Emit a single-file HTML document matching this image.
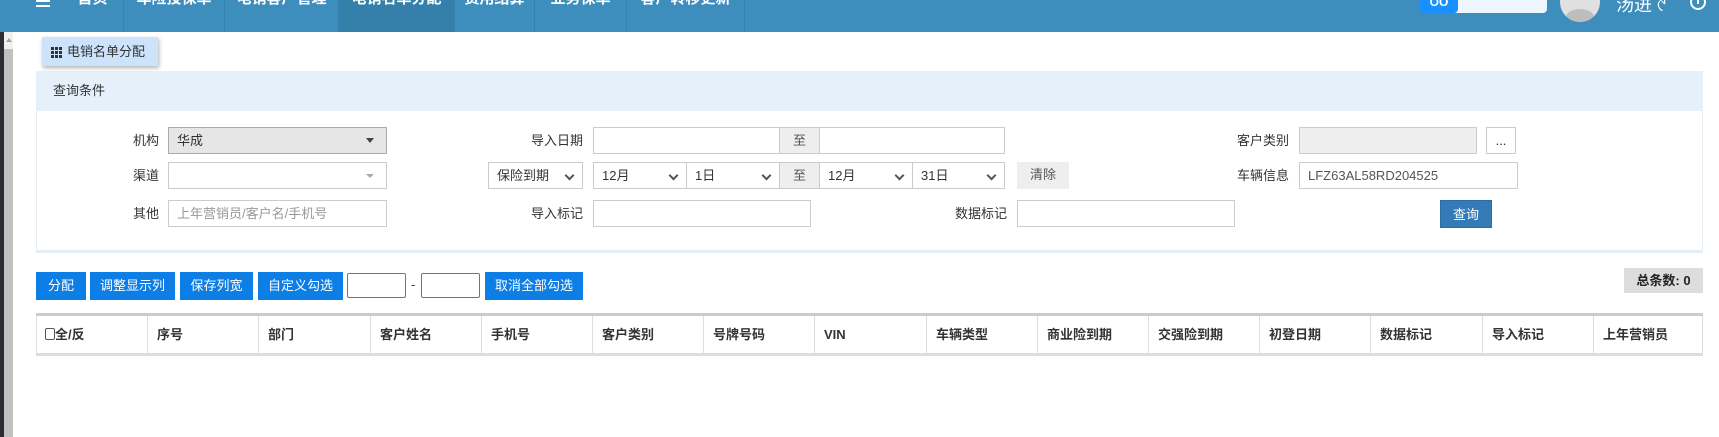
<!DOCTYPE html>
<html><head><meta charset="utf-8"><style>
*{box-sizing:border-box;margin:0;padding:0}
body{width:1719px;height:437px;overflow:hidden;background:#fff;font-family:"Liberation Sans","Noto Sans CJK SC",sans-serif;font-size:13px;color:#333;position:relative}
.a{position:absolute}
.nav{left:0;top:0;width:1719px;height:32px;background:#3d8dbd}
.ni{position:absolute;top:0;height:32px;color:#fff;font-size:15px;font-weight:bold;line-height:1;padding-top:0;text-align:center;border-right:1px solid #3582b0;overflow:hidden}
.ni span{position:relative;top:-9px}
.lbl{position:absolute;text-align:right;width:80px;line-height:27px}
.in{position:absolute;height:27px;border:1px solid #ccc;background:#fff;line-height:25px;padding-left:8px}
.add{position:absolute;height:27px;background:#eee;border:1px solid #ccc;text-align:center;line-height:25px;color:#555}
.sel::after{content:"";position:absolute;right:9px;top:9px;width:5px;height:5px;border-right:2px solid #555;border-bottom:2px solid #555;transform:rotate(45deg)}
.btn{position:absolute;top:272px;height:28px;background:#0c7ee6;color:#fff;line-height:28px;text-align:center}
.th{position:absolute;top:316px;height:37px;line-height:37px;padding-left:9px;border-left:1px solid #ddd;font-weight:bold;color:#333;font-size:13px}
.g{position:absolute;width:3px;height:3px;background:#333}
</style></head><body>
<div class="a nav"></div>
<div class="a" style="left:36px;top:0;width:14px;height:2px;background:#fff"></div>
<div class="a" style="left:36px;top:5px;width:14px;height:2px;background:#fff"></div>
<div class="ni" style="left:62px;width:62px"><span>首页</span></div>
<div class="ni" style="left:124px;width:101px"><span>车险投保单</span></div>
<div class="ni" style="left:225px;width:114px"><span>电销客户管理</span></div>
<div class="ni" style="left:339px;width:116px;background:#3580aa"><span>电销名单分配</span></div>
<div class="ni" style="left:455px;width:80px"><span>费用结算</span></div>
<div class="ni" style="left:535px;width:92px"><span>业务保单</span></div>
<div class="ni" style="left:627px;width:118px"><span>客户转移更新</span></div>
<div class="a" style="left:1420px;top:0;width:128px;height:14px;background:#eef6ff;border-radius:0 0 5px 5px;border:1px solid #1e90ff;border-top:none"></div>
<div class="a" style="left:1420px;top:0;width:38px;height:13px;background:#1890ff;border-radius:0 0 4px 4px;color:#fff;font-weight:bold;font-size:12px;line-height:1;text-align:center;overflow:hidden"><span style="position:relative;top:-4px">OO</span></div>
<div class="a" style="left:1560px;top:-18px;width:40px;height:40px;border-radius:50%;background:#e0e0e0;overflow:hidden"><div class="a" style="left:6px;top:27px;width:28px;height:16px;border-radius:50%;background:#bdbdbd"></div></div>
<div class="a" style="left:1616px;top:-9px;color:#fff;font-size:18px">汤进 ୯</div>
<div class="a" style="left:1690px;top:-6px;width:16px;height:16px;border:2px solid #fff;border-radius:50%"></div>
<div class="a" style="left:1697px;top:-2px;width:2px;height:6px;background:#fff"></div>
<div class="a" style="left:0;top:32px;width:4px;height:405px;background:#2b2f33"></div>
<div class="a" style="left:4px;top:32px;width:9px;height:405px;background:#c1c1c1"></div>
<div class="a" style="left:4px;top:32px;width:9px;height:17px;background:#f1f1f1"></div>
<div class="a" style="left:6px;top:38px;border-left:3px solid transparent;border-right:3px solid transparent;border-bottom:4px solid #a3a3a3"></div>
<div class="a" style="left:42px;top:37px;width:116px;height:29px;background:#cce3fb;box-shadow:1px 2px 4px rgba(0,0,0,.3);line-height:29px;padding-left:25px;font-size:13px;color:#333">电销名单分配
<i class="g" style="left:9px;top:10px"></i><i class="g" style="left:13px;top:10px"></i><i class="g" style="left:17px;top:10px"></i>
<i class="g" style="left:9px;top:14px"></i><i class="g" style="left:13px;top:14px"></i><i class="g" style="left:17px;top:14px"></i>
<i class="g" style="left:9px;top:18px"></i><i class="g" style="left:13px;top:18px"></i><i class="g" style="left:17px;top:18px"></i></div>
<div class="a" style="left:36px;top:71px;width:1667px;height:182px;border:1px solid #e6eef5;border-bottom:3px solid #e6eef5"></div>
<div class="a" style="left:36px;top:71px;width:1667px;height:40px;background:#e6f0fa;line-height:40px;padding-left:17px">查询条件</div>
<div class="lbl" style="left:79px;top:127px">机构</div>
<div class="in" style="left:168px;top:127px;width:219px;background:#e6e6e6;border-color:#aaa">华成</div>
<div class="a" style="left:366px;top:138px;border-left:4px solid transparent;border-right:4px solid transparent;border-top:5px solid #444"></div>
<div class="lbl" style="left:79px;top:162px">渠道</div>
<div class="in" style="left:168px;top:162px;width:219px"></div>
<div class="a" style="left:366px;top:174px;border-left:4px solid transparent;border-right:4px solid transparent;border-top:4px solid #aaa"></div>
<div class="lbl" style="left:79px;top:200px">其他</div>
<div class="in" style="left:168px;top:200px;width:219px;color:#999">上年营销员/客户名/手机号</div>
<div class="lbl" style="left:503px;top:127px">导入日期</div>
<div class="in" style="left:593px;top:127px;width:187px"></div>
<div class="add" style="left:779px;top:127px;width:41px">至</div>
<div class="in" style="left:819px;top:127px;width:186px"></div>
<div class="in sel" style="left:488px;top:162px;width:95px">保险到期</div>
<div class="in sel" style="left:593px;top:162px;width:94px">12月</div>
<div class="in sel" style="left:686px;top:162px;width:94px">1日</div>
<div class="add" style="left:779px;top:162px;width:41px">至</div>
<div class="in sel" style="left:819px;top:162px;width:94px">12月</div>
<div class="in sel" style="left:912px;top:162px;width:93px">31日</div>
<div class="add" style="left:1017px;top:162px;width:52px;border:none">清除</div>
<div class="lbl" style="left:503px;top:200px">导入标记</div>
<div class="in" style="left:593px;top:200px;width:218px"></div>
<div class="lbl" style="left:927px;top:200px">数据标记</div>
<div class="in" style="left:1017px;top:200px;width:218px"></div>
<div class="lbl" style="left:1209px;top:127px">客户类别</div>
<div class="in" style="left:1299px;top:127px;width:178px;background:#eee"></div>
<div class="in" style="left:1486px;top:127px;width:30px;padding:0;text-align:center">...</div>
<div class="lbl" style="left:1209px;top:162px">车辆信息</div>
<div class="in" style="left:1299px;top:162px;width:219px;color:#555">LFZ63AL58RD204525</div>
<div class="a" style="left:1440px;top:200px;width:52px;height:28px;background:#337ab7;color:#fff;line-height:28px;text-align:center;border:1px solid #2e6da4">查询</div>
<div class="btn" style="left:36px;width:50px">分配</div>
<div class="btn" style="left:90px;width:85px">调整显示列</div>
<div class="btn" style="left:180px;width:73px">保存列宽</div>
<div class="btn" style="left:258px;width:85px">自定义勾选</div>
<div class="a" style="left:347px;top:273px;width:59px;height:25px;border:1px solid #767676;border-radius:2px"></div>
<div class="a" style="left:411px;top:277px">-</div>
<div class="a" style="left:421px;top:273px;width:59px;height:25px;border:1px solid #767676;border-radius:2px"></div>
<div class="btn" style="left:485px;width:98px">取消全部勾选</div>
<div class="a" style="left:1624px;top:268px;width:79px;height:25px;background:#ddd;font-weight:bold;line-height:25px;text-align:center;color:#222">总条数: 0</div>
<div class="a" style="left:36px;top:313px;width:1667px;height:3px;background:#ccc"></div>
<div class="a" style="left:36px;top:353px;width:1667px;height:3px;background:#ddd"></div>
<div class="a" style="left:1702px;top:316px;width:1px;height:37px;background:#ddd"></div>
<div class="th" style="left:36px;width:111px;padding-left:8px"><span style="display:inline-block;width:10px;height:12px;border:1px solid #555;border-radius:2px;vertical-align:-1px"></span>全/反</div>
<div class="th" style="left:147px;width:111px">序号</div>
<div class="th" style="left:258px;width:112px">部门</div>
<div class="th" style="left:370px;width:111px">客户姓名</div>
<div class="th" style="left:481px;width:111px">手机号</div>
<div class="th" style="left:592px;width:111px">客户类别</div>
<div class="th" style="left:703px;width:111px">号牌号码</div>
<div class="th" style="left:814px;width:112px">VIN</div>
<div class="th" style="left:926px;width:111px">车辆类型</div>
<div class="th" style="left:1037px;width:111px">商业险到期</div>
<div class="th" style="left:1148px;width:111px">交强险到期</div>
<div class="th" style="left:1259px;width:111px">初登日期</div>
<div class="th" style="left:1370px;width:112px">数据标记</div>
<div class="th" style="left:1482px;width:111px">导入标记</div>
<div class="th" style="left:1593px;width:110px">上年营销员</div>
</body></html>
